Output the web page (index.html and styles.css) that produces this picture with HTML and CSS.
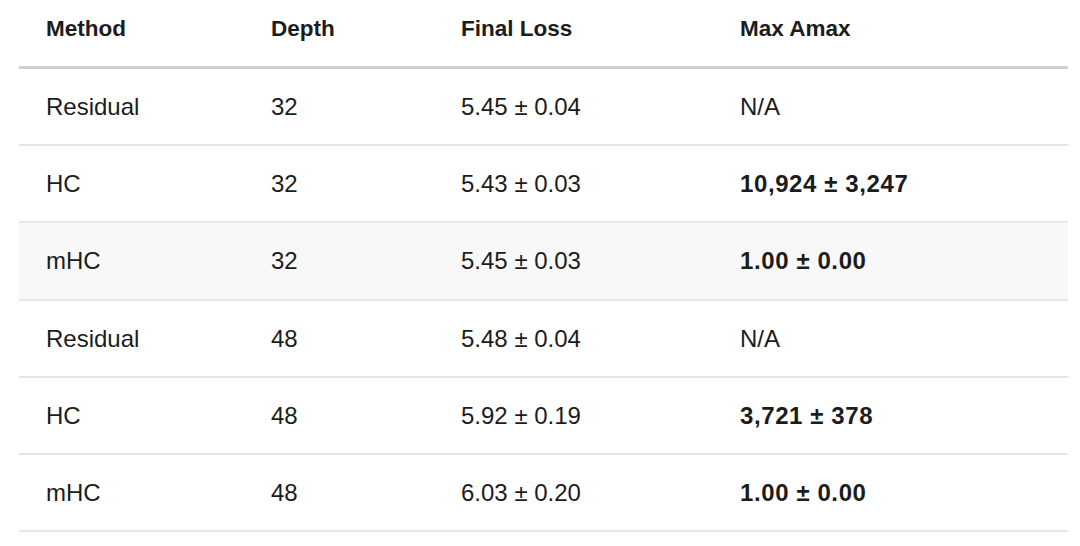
FILE: index.html
```html
<!DOCTYPE html>
<html>
<head>
<meta charset="utf-8">
<link rel="stylesheet" href="styles.css">
</head>
<body>
<table class="results">
  <colgroup>
    <col class="c1"><col class="c2"><col class="c3"><col class="c4">
  </colgroup>
  <thead>
    <tr><th>Method</th><th>Depth</th><th>Final Loss</th><th>Max Amax</th></tr>
  </thead>
  <tbody>
    <tr><td>Residual</td><td>32</td><td>5.45 ± 0.04</td><td>N/A</td></tr>
    <tr><td>HC</td><td>32</td><td>5.43 ± 0.03</td><td class="strong">10,924 ± 3,247</td></tr>
    <tr class="shade"><td>mHC</td><td>32</td><td>5.45 ± 0.03</td><td class="strong">1.00 ± 0.00</td></tr>
    <tr><td>Residual</td><td>48</td><td>5.48 ± 0.04</td><td>N/A</td></tr>
    <tr><td>HC</td><td>48</td><td>5.92 ± 0.19</td><td class="strong">3,721 ± 378</td></tr>
    <tr><td>mHC</td><td>48</td><td>6.03 ± 0.20</td><td class="strong">1.00 ± 0.00</td></tr>
  </tbody>
</table>
</body>
</html>
```

FILE: styles.css
```css
html, body {
  margin: 0;
  padding: 0;
  background: #ffffff;
}
body {
  padding: 0 12px 0 19px;
  font-family: "Liberation Sans", Arial, sans-serif;
  color: #1c1c1c;
  font-size: 24px;
}
.results {
  width: 1049px;
  border-collapse: separate;
  border-spacing: 0;
  table-layout: fixed;
}
.c1 { width: 225px; }
.c2 { width: 190px; }
.c3 { width: 279px; }
.c4 { width: 355px; }
.results th {
  text-align: left;
  font-weight: 700;
  font-size: 22.5px;
  height: 69px;
  padding: 0 0 9px 27px;
  box-sizing: border-box;
  vertical-align: middle;
  border-bottom: 3px solid #d0d0d0;
}
.results td {
  height: 77.2px;
  box-sizing: border-box;
  padding: 1px 0 0 27px;
  vertical-align: middle;
  border-bottom: 2px solid #e6e6e6;
}
.results .shade td {
  background: #f8f8f8;
}
.results td.strong {
  font-weight: 700;
  letter-spacing: 0.6px;
}
```
